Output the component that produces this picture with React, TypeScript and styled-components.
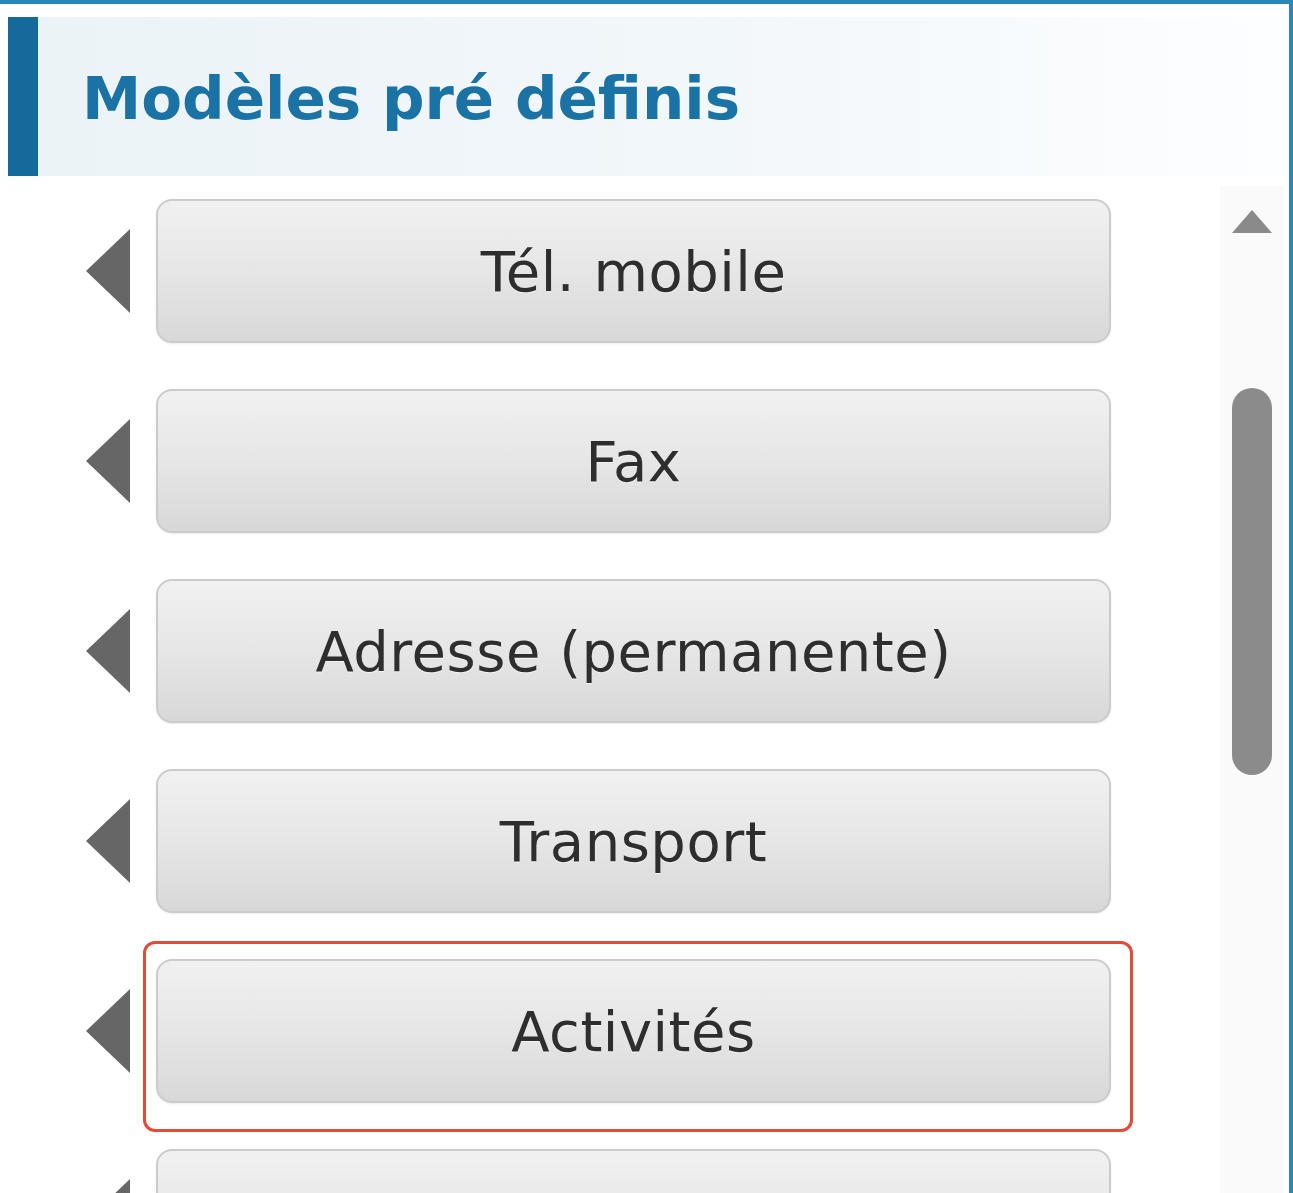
import React from "react";
import styled, { createGlobalStyle } from "styled-components";

const Global = createGlobalStyle`
  html, body { margin: 0; padding: 0; background: #ffffff; }
  body { font-family: "DejaVu Sans", Verdana, sans-serif; overflow: hidden; }
`;

const Frame = styled.div`
  box-sizing: border-box;
  width: 1293px;
  height: 1193px;
  overflow: hidden;
  border-top: 4px solid #2a87b8;
  border-right: 4px solid #2a87b8;
  padding: 13px 0 0 8px;
  background: #ffffff;
`;

const Header = styled.div`
  display: flex;
  align-items: center;
  height: 159px;
  background: linear-gradient(to right, #ebf3f8 0%, #f2f7fa 55%, #fdfeff 100%);
`;

const HeaderBar = styled.div`
  align-self: stretch;
  width: 30px;
  background: #15699b;
`;

const Title = styled.h1`
  margin: 0 0 0 44px;
  font-family: "DejaVu Sans", Verdana, sans-serif;
  font-weight: bold;
  font-size: 59.5px;
  line-height: 1;
  color: #1a72a5;
  position: relative;
  top: 2px;
`;

const Body = styled.div`
  display: flex;
  margin-top: 10px;
`;

const List = styled.div`
  flex: 1;
  display: flex;
  flex-direction: column;
  gap: 46px;
  padding: 13px 0 0 78px;
`;

const Row = styled.div`
  display: flex;
  align-items: center;
  gap: 26px;
`;

const Arrow = styled.svg`
  width: 44px;
  height: 84px;
  flex: none;
`;

const ButtonWrap = styled.div`
  position: relative;
`;

const Button = styled.div`
  box-sizing: border-box;
  width: 955px;
  height: 144px;
  display: flex;
  align-items: center;
  justify-content: center;
  border: 2px solid #cbcbcb;
  border-radius: 16px;
  background: linear-gradient(to bottom, #f1f1f1 0%, #e6e6e6 50%, #d8d8d8 100%);
  box-shadow: 0 1px 2px rgba(0, 0, 0, 0.08);
  font-family: "DejaVu Sans", Verdana, sans-serif;
  font-size: 56px;
  letter-spacing: 0.5px;
  color: #2e2e2e;
  text-shadow: 0 1px 0 rgba(255, 255, 255, 0.6);
`;

const Highlight = styled.div`
  position: absolute;
  top: -18px;
  left: -13px;
  right: -22px;
  bottom: -29px;
  border: 3px solid #e04b3a;
  border-radius: 12px;
  pointer-events: none;
`;

const ScrollTrack = styled.div`
  width: 63px;
  margin-right: 6px;
  background: #fafafa;
  display: flex;
  flex-direction: column;
  align-items: center;
  padding-top: 24px;
`;

const ScrollArrow = styled.svg`
  width: 40px;
  height: 23px;
  flex: none;
`;

const Thumb = styled.div`
  width: 40px;
  height: 387px;
  margin-top: 155px;
  border-radius: 20px;
  background: #8b8b8b;
`;

const items: { label: string; highlighted?: boolean }[] = [
  { label: "Tél. mobile" },
  { label: "Fax" },
  { label: "Adresse (permanente)" },
  { label: "Transport" },
  { label: "Activités", highlighted: true },
  { label: "" },
];

export default function App() {
  return (
    <>
      <Global />
      <Frame>
        <Header>
          <HeaderBar />
          <Title>Modèles pré définis</Title>
        </Header>
        <Body>
          <List>
            {items.map((it, i) => (
              <Row key={i}>
                <Arrow viewBox="0 0 44 84">
                  <polygon points="0,42 44,0 44,84" fill="#666666" />
                </Arrow>
                <ButtonWrap>
                  <Button>{it.label}</Button>
                  {it.highlighted && <Highlight />}
                </ButtonWrap>
              </Row>
            ))}
          </List>
          <ScrollTrack>
            <ScrollArrow viewBox="0 0 40 23">
              <polygon points="20,0 40,23 0,23" fill="#8a8a8a" />
            </ScrollArrow>
            <Thumb />
          </ScrollTrack>
        </Body>
      </Frame>
    </>
  );
}
